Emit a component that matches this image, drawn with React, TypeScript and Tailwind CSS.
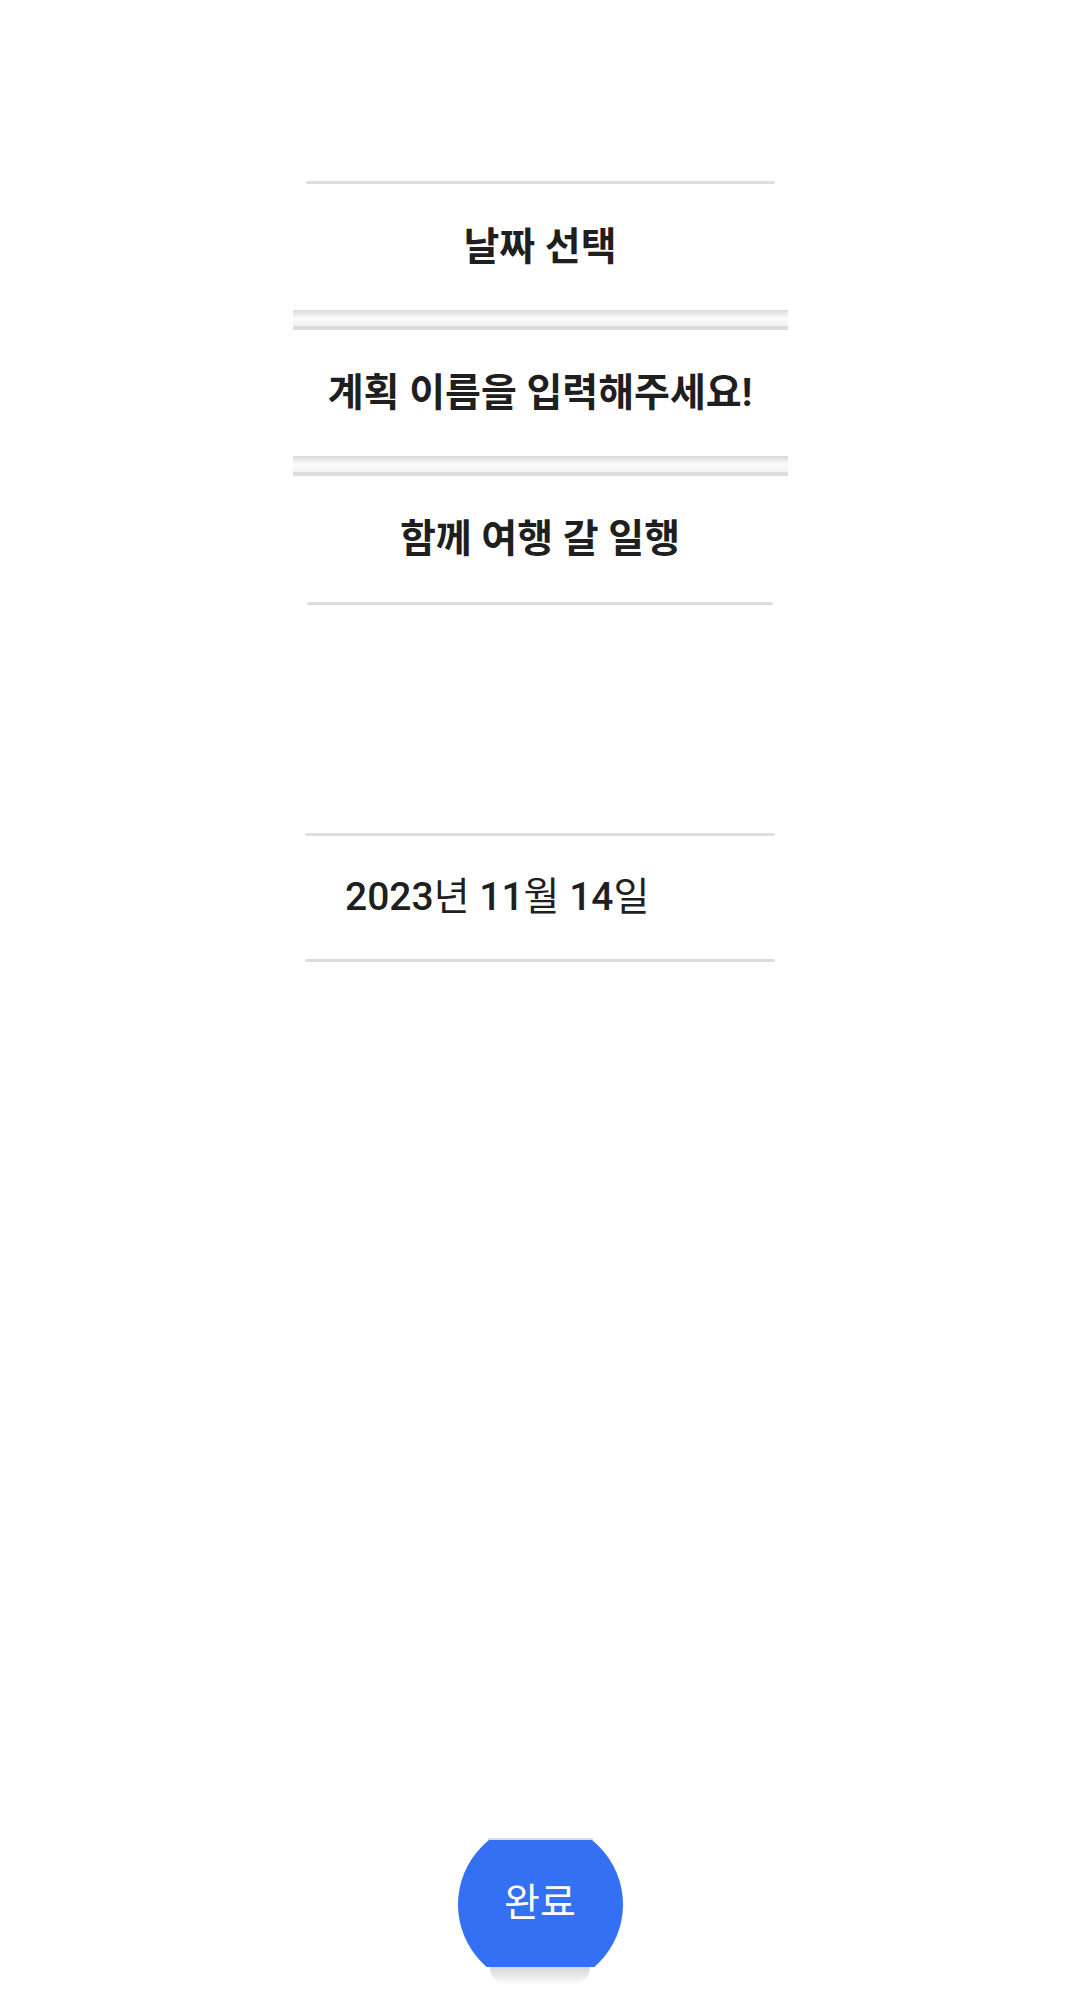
import React from "react";

const font = { fontFamily: "Roboto, 'Noto Sans CJK KR', 'Noto Sans', sans-serif" };

const Band = () => (
  <div className="h-[20px] w-full bg-gradient-to-b from-[#d9d9d9] via-[#fbfbfb] to-[#f2f2f2] border-b-[4px] border-[#dcdcdc]" />
);

const Row = ({ label }: { label: string }) => (
  <div className="h-[126px] w-full flex items-center justify-center bg-white">
    <span className="text-[39px] font-bold text-[#1f1f1f]">{label}</span>
  </div>
);

export default function App() {
  return (
    <main
      className="min-h-[1991px] h-[1991px] w-full bg-white flex flex-col items-center overflow-hidden"
      style={font}
    >
      <section className="mt-[181px] w-[495px] flex flex-col items-center">
        <div className="h-[3px] w-[469px] rounded-full bg-[#dedede]" />
        <div className="h-[126px] w-full flex items-center justify-center bg-white">
          <span className="text-[39px] font-bold text-[#1f1f1f]">날짜 선택</span>
        </div>
        <Band />
        <Row label="계획 이름을 입력해주세요!" />
        <Band />
        <Row label="함께 여행 갈 일행" />
        <div className="h-[3px] w-[466px] rounded-full bg-[#dcdcdc]" />
      </section>

      <section className="mt-[228px] w-[470px] flex flex-col">
        <div className="h-[3px] w-full rounded-full bg-[#dedede]" />
        <div className="h-[123px] flex items-center pl-[40px]">
          <span className="text-[39px] font-medium text-[#1f1f1f]">
            2023<span className="font-normal">년</span> 11<span className="font-normal">월</span> 14
            <span className="font-normal">일</span>
          </span>
        </div>
        <div className="h-[3px] w-full rounded-full bg-[#dcdcdc]" />
      </section>

      <div className="flex-1" />

      <div className="mb-[6px] flex flex-col items-center">
        <div className="h-[2px] w-[105px] bg-[#dcdcdc]" />
        <button className="relative h-[127px] w-[165px] overflow-hidden flex items-center justify-center">
          <span className="absolute left-0 top-[-18px] h-[165px] w-[165px] rounded-full bg-[#3470f3]" />
          <span className="relative text-[39px] text-white">완료</span>
        </button>
        <div className="h-[18px] w-[100px] rounded-b-full bg-gradient-to-b from-[#d6d6d6] to-white" />
      </div>
    </main>
  );
}
